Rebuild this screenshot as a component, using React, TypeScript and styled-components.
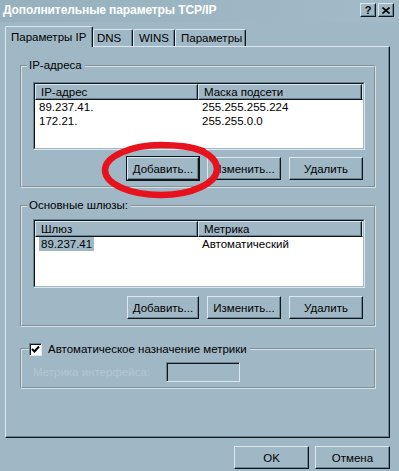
import React from "react";
import styled, { createGlobalStyle, css } from "styled-components";

const C = {
  face: "#a0b8c5",
  light: "#dce8ef",
  shadow: "#6c8491",
  dark: "#0e161b",
  disabled: "#b3c6d1",
};

const GlobalStyle = createGlobalStyle`
  html, body { margin: 0; padding: 0; background: ${C.face}; }
  body { font-family: "Liberation Sans", Arial, sans-serif; font-size: 11.5px; color: #000; }
  * { box-sizing: border-box; }
`;

const Window = styled.div`
  position: relative;
  width: 399px;
  height: 471px;
  overflow: hidden;
  background: ${C.face};
  display: flex;
  flex-direction: column;
`;

const TitleBar = styled.div`
  height: 22px;
  flex: none;
  display: flex;
  align-items: center;
  justify-content: space-between;
  padding: 0 5px 2px 3px;
  background: linear-gradient(to right, #97b0be, #a3bbc8);
`;

const Title = styled.div`
  color: #fff;
  font-weight: bold;
  font-size: 12px;
  letter-spacing: -0.1px;
`;

const TitleButtons = styled.div`
  display: flex;
  gap: 2px;
`;

const raised = css`
  background: ${C.face};
  border: 1px solid;
  border-color: ${C.light} ${C.dark} ${C.dark} ${C.light};
  box-shadow: inset -1px -1px 0 ${C.shadow};
`;

const TitleButton = styled.div`
  ${raised};
  width: 16px;
  height: 14px;
  display: flex;
  align-items: center;
  justify-content: center;
  font-weight: bold;
  font-size: 11px;
  line-height: 1;
`;

const Body = styled.div`
  padding: 4px 9px 0 5px;
  display: flex;
  flex-direction: column;
`;

const TabStrip = styled.div`
  display: flex;
  align-items: flex-end;
  height: 20px;
  position: relative;
  z-index: 1;
`;

const Tab = styled.div<{ $active?: boolean; $w: number; $pl: number }>`
  background: ${C.face};
  width: ${(p) => p.$w}px;
  flex: none;
  height: ${(p) => (p.$active ? 21 : 17)}px;
  margin-bottom: ${(p) => (p.$active ? -1 : 0)}px;
  padding: 0 0 ${(p) => (p.$active ? 1 : 0)}px ${(p) => p.$pl}px;
  border-top: 1px solid ${C.light};
  border-left: 1px solid ${C.light};
  border-right: 1px solid ${C.dark};
  box-shadow: inset -1px 0 0 ${C.shadow};
  border-radius: 2px 2px 0 0;
  display: flex;
  align-items: center;
  white-space: nowrap;
`;

const Panel = styled.div`
  height: 392px;
  border: 1px solid;
  border-color: ${C.light} ${C.dark} ${C.dark} ${C.light};
  box-shadow: inset -1px -1px 0 ${C.shadow};
  padding: 12px 13px 0 14px;
  display: flex;
  flex-direction: column;
`;

const Group = styled.fieldset<{ $mt?: number; $pt: number; $pb: number }>`
  margin: ${(p) => p.$mt ?? 0}px 0 0 0;
  padding: ${(p) => p.$pt}px 9px ${(p) => p.$pb}px 11px;
  border: 2px groove #d2e0e8;
  min-width: 0;
`;

const Legend = styled.legend`
  margin-left: -6px;
  padding: 0 3px 0 2px;
  line-height: 13px;
  height: 13px;
`;

const CheckLegend = styled.legend`
  margin-left: -4px;
  padding: 0 3px 0 0;
  height: 14px;
  display: flex;
  align-items: center;
  gap: 6px;
`;

const CheckBox = styled.span`
  width: 13px;
  height: 13px;
  background: #fff;
  border: 1px solid;
  border-color: ${C.shadow} ${C.light} ${C.light} ${C.shadow};
  box-shadow: inset 1px 1px 0 ${C.dark};
  display: flex;
  align-items: center;
  justify-content: center;
`;

const ListOuter = styled.div<{ $h: number }>`
  height: ${(p) => p.$h}px;
  border: 1px solid;
  border-color: ${C.shadow} ${C.light} ${C.light} ${C.shadow};
`;

const ListInner = styled.div`
  height: 100%;
  background: #fff;
  border: 1px solid;
  border-color: ${C.dark} ${C.face} ${C.face} ${C.dark};
  overflow: hidden;
`;

const HeaderRow = styled.div`
  display: flex;
  height: 16px;
`;

const HeaderCell = styled.div<{ $w?: number }>`
  ${raised};
  ${(p) => (p.$w ? `width: ${p.$w}px; flex: none;` : "flex: 1;")}
  padding-left: 5px;
  display: flex;
  align-items: center;
  white-space: nowrap;
`;

const Row = styled.div`
  display: flex;
  height: 14px;
  align-items: center;
`;

const Cell = styled.div<{ $w?: number }>`
  ${(p) => (p.$w ? `width: ${p.$w}px; flex: none;` : "flex: 1;")}
  padding-left: 4px;
  white-space: nowrap;
`;

const Selected = styled.span`
  background: ${C.face};
  padding: 0 2px;
  line-height: 14px;
  display: inline-block;
`;

const ButtonRow = styled.div<{ $mt: number }>`
  display: flex;
  justify-content: flex-end;
  gap: 8px;
  margin-top: ${(p) => p.$mt}px;
  padding-right: 2px;
`;

const Button = styled.div<{ $default?: boolean; $w?: number }>`
  ${raised};
  width: ${(p) => p.$w ?? 74}px;
  height: 23px;
  display: flex;
  align-items: center;
  justify-content: center;
  white-space: nowrap;
  ${(p) =>
    p.$default &&
    css`
      outline: 1px solid ${C.dark};
    `}
`;

const MetricRow = styled.div`
  display: flex;
  align-items: center;
`;

const DisabledLabel = styled.span`
  width: 133px;
  flex: none;
  color: ${C.disabled};
`;

const DisabledInput = styled.div`
  width: 74px;
  height: 20px;
  border: 1px solid;
  border-color: ${C.shadow} ${C.light} ${C.light} ${C.shadow};
  box-shadow: inset 1px 1px 0 ${C.dark};
  background: ${C.face};
`;

const Footer = styled.div`
  display: flex;
  justify-content: flex-end;
  gap: 6px;
  margin-top: 8px;
`;

const Scribble = styled.svg`
  position: absolute;
  left: 0;
  top: 0;
  pointer-events: none;
`;

export default function App() {
  return (
    <>
      <GlobalStyle />
      <Window>
        <TitleBar>
          <Title>Дополнительные параметры TCP/IP</Title>
          <TitleButtons>
            <TitleButton>?</TitleButton>
            <TitleButton>
              <svg width="8" height="7" viewBox="0 0 8 7">
                <path d="M0.5 0.5 L7.5 6.5 M7.5 0.5 L0.5 6.5" stroke="#000" strokeWidth="1.6" />
              </svg>
            </TitleButton>
          </TitleButtons>
        </TitleBar>
        <Body>
          <TabStrip>
            <Tab $active $w={88} $pl={5}>Параметры IP</Tab>
            <Tab $w={40} $pl={3}>DNS</Tab>
            <Tab $w={42} $pl={5}>WINS</Tab>
            <Tab $w={71} $pl={5}>Параметры</Tab>
          </TabStrip>
          <Panel>
            <Group $pt={10} $pb={6}>
              <Legend>IP-адреса</Legend>
              <ListOuter $h={68}>
                <ListInner>
                  <HeaderRow>
                    <HeaderCell $w={163}>IP-адрес</HeaderCell>
                    <HeaderCell $w={164}>Маска подсети</HeaderCell>
                    <HeaderCell />
                  </HeaderRow>
                  <Row>
                    <Cell $w={163}>89.237.41.</Cell>
                    <Cell>255.255.255.224</Cell>
                  </Row>
                  <Row>
                    <Cell $w={163}>172.21.</Cell>
                    <Cell>255.255.0.0</Cell>
                  </Row>
                </ListInner>
              </ListOuter>
              <ButtonRow $mt={7}>
                <Button $default $w={72}>Добавить...</Button>
                <Button>Изменить...</Button>
                <Button>Удалить</Button>
              </ButtonRow>
            </Group>

            <Group $mt={11} $pt={7} $pb={6}>
              <Legend>Основные шлюзы:</Legend>
              <ListOuter $h={69}>
                <ListInner>
                  <HeaderRow>
                    <HeaderCell $w={163}>Шлюз</HeaderCell>
                    <HeaderCell $w={164}>Метрика</HeaderCell>
                    <HeaderCell />
                  </HeaderRow>
                  <Row>
                    <Cell $w={163}>
                      <Selected>89.237.41</Selected>
                    </Cell>
                    <Cell>Автоматический</Cell>
                  </Row>
                </ListInner>
              </ListOuter>
              <ButtonRow $mt={8}>
                <Button $w={72}>Добавить...</Button>
                <Button>Изменить...</Button>
                <Button>Удалить</Button>
              </ButtonRow>
            </Group>

            <Group $mt={15} $pt={6} $pb={5}>
              <CheckLegend>
                <CheckBox>
                  <svg width="9" height="9" viewBox="0 0 9 9">
                    <path d="M1 4 L3.5 6.5 L8 1.5" stroke="#000" strokeWidth="2" fill="none" />
                  </svg>
                </CheckBox>
                Автоматическое назначение метрики
              </CheckLegend>
              <MetricRow>
                <DisabledLabel>Метрика интерфейса:</DisabledLabel>
                <DisabledInput />
              </MetricRow>
            </Group>
          </Panel>
          <Footer>
            <Button $w={75}>OK</Button>
            <Button $w={75}>Отмена</Button>
          </Footer>
        </Body>
        <Scribble width="399" height="471" viewBox="0 0 399 471">
          <path
            d="M 203 151 C 190 146, 176 145, 161 145 C 130 145, 105 157, 105 170 C 105 184, 130 195, 161 195 C 192 195, 217 183, 217 169 C 217 158, 204 150, 188 147"
            stroke="#e8121c"
            strokeWidth="6.5"
            fill="none"
            strokeLinecap="round"
          />
        </Scribble>
      </Window>
    </>
  );
}
